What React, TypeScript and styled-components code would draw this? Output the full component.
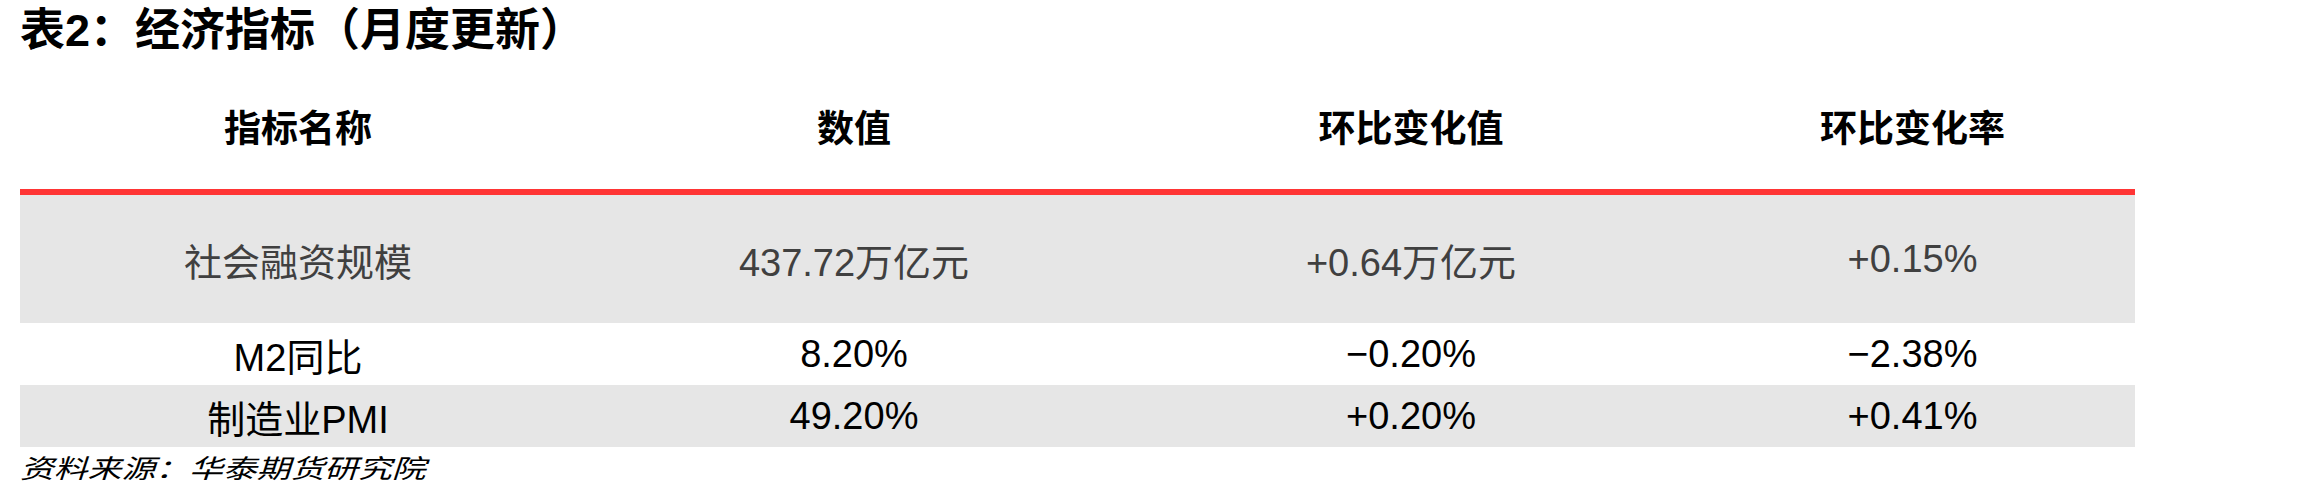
import styled, { createGlobalStyle } from 'styled-components';

const GlobalStyle = createGlobalStyle`
  html, body {
    margin: 0;
    padding: 0;
    background: #ffffff;
    overflow: hidden;
  }
  body {
    font-family: "Liberation Sans", "Noto Sans CJK SC", sans-serif;
    color: #000000;
  }
`;

const Page = styled.div`
  display: flex;
  flex-direction: column;
  align-items: flex-start;
  padding: 0 20px;
`;

const Title = styled.h2`
  margin: 0;
  height: 62px;
  line-height: 62px;
  font-size: 45px;
  font-weight: 700;
  white-space: nowrap;
`;

const Table = styled.div`
  display: grid;
  grid-template-columns: 556px 556px 558px 445px;
  width: 2115px;
`;

const HeaderCell = styled.div`
  height: 127px;
  display: flex;
  align-items: center;
  justify-content: center;
  font-size: 37px;
  font-weight: 700;
  border-bottom: 6px solid #ff3535;
`;

const Cell = styled.div<{ $shaded?: boolean; $tall?: boolean; $muted?: boolean }>`
  height: ${(p) => (p.$tall ? '128px' : '62px')};
  display: flex;
  align-items: center;
  justify-content: center;
  background: ${(p) => (p.$shaded ? '#e6e6e6' : '#ffffff')};
  color: ${(p) => (p.$muted ? '#404040' : '#000000')};
  font-size: 38px;
  white-space: nowrap;
`;

const Source = styled.div`
  display: inline-block;
  height: 44px;
  line-height: 44px;
  font-size: 26px;
  font-style: italic;
  transform: scaleX(1.3);
  transform-origin: left center;
  white-space: nowrap;
`;

const headers = ['指标名称', '数值', '环比变化值', '环比变化率'];

const rows = [
  { cells: ['社会融资规模', '437.72万亿元', '+0.64万亿元', '+0.15%'], shaded: true, tall: true, muted: true },
  { cells: ['M2同比', '8.20%', '−0.20%', '−2.38%'], shaded: false, tall: false, muted: false },
  { cells: ['制造业PMI', '49.20%', '+0.20%', '+0.41%'], shaded: true, tall: false, muted: false },
];

export default function App() {
  return (
    <>
      <GlobalStyle />
      <Page>
        <Title>表2：经济指标（月度更新）</Title>
        <Table>
          {headers.map((h) => (
            <HeaderCell key={h}>{h}</HeaderCell>
          ))}
          {rows.map((row, i) =>
            row.cells.map((c, j) => (
              <Cell key={`${i}-${j}`} $shaded={row.shaded} $tall={row.tall} $muted={row.muted}>
                {c}
              </Cell>
            )),
          )}
        </Table>
        <Source>资料来源：华泰期货研究院</Source>
      </Page>
    </>
  );
}
